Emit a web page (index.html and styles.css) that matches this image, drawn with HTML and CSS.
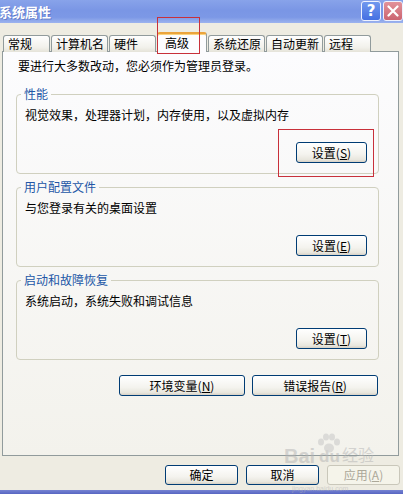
FILE: index.html
```html
<!DOCTYPE html>
<html lang="zh-CN">
<head>
    <meta charset="UTF-8">
    <title>系统属性</title>
    <link rel="stylesheet" href="styles.css">
</head>
<body>
    <div class="titlebar">
        <span class="title">系统属性</span>
        <div class="controls">
            <span class="ctl help">?</span>
            <span class="ctl close">
                <svg width="12" height="12" viewBox="0 0 12 12"><path d="M1.5 1.5 L10.5 10.5 M10.5 1.5 L1.5 10.5" stroke="#fff" stroke-width="2.2" stroke-linecap="round"/></svg>
            </span>
        </div>
    </div>

    <div class="tabs">
        <span class="tab">常规</span>
        <span class="tab">计算机名</span>
        <span class="tab">硬件</span>
        <span class="tab active">高级</span>
        <span class="tab">系统还原</span>
        <span class="tab">自动更新</span>
        <span class="tab">远程</span>
    </div>

    <div class="panel">
        <p class="intro">要进行大多数改动，您必须作为管理员登录。</p>

        <fieldset class="group">
            <legend>性能</legend>
            <p class="desc">视觉效果，处理器计划，内存使用，以及虚拟内存</p>
            <div class="actions"><button class="btn btn-set">设置(<u>S</u>)</button></div>
        </fieldset>

        <fieldset class="group">
            <legend>用户配置文件</legend>
            <p class="desc">与您登录有关的桌面设置</p>
            <div class="actions"><button class="btn btn-set">设置(<u>E</u>)</button></div>
        </fieldset>

        <fieldset class="group">
            <legend>启动和故障恢复</legend>
            <p class="desc">系统启动，系统失败和调试信息</p>
            <div class="actions"><button class="btn btn-set">设置(<u>T</u>)</button></div>
        </fieldset>

        <div class="extra">
            <button class="btn btn-wide">环境变量(<u>N</u>)</button>
            <button class="btn btn-wide">错误报告(<u>R</u>)</button>
        </div>
    </div>

    <div class="footer">
        <button class="btn btn-dlg">确定</button>
        <button class="btn btn-dlg">取消</button>
        <button class="btn btn-dlg" disabled>应用(<u>A</u>)</button>
    </div>
    <div class="frame-bottom"></div>

    <!-- red marks drawn over the screenshot -->
    <div class="mark mark-tab"></div>
    <div class="mark mark-btn"></div>

    <div class="watermark">
        <svg class="paw" width="26" height="20" viewBox="0 0 26 20">
            <ellipse cx="5" cy="9" rx="3" ry="3.5"/>
            <ellipse cx="10" cy="4" rx="3" ry="3.5"/>
            <ellipse cx="16" cy="4" rx="3" ry="3.5"/>
            <ellipse cx="21" cy="9" rx="3" ry="3.5"/>
            <ellipse cx="13" cy="15" rx="5" ry="4.5"/>
        </svg>
        <span class="wm-bai">Bai</span><span class="wm-du">du</span><span class="wm-jy">经验</span>
        <span class="wm-url">jingyan.baidu.com</span>
    </div>
</body>
</html>
```

FILE: styles.css
```css
body {
    margin: 0;
    width: 403px;
    height: 494px;
    overflow: hidden;
    position: relative;
    font-family: "Noto Sans CJK SC", sans-serif;
    font-size: 12px;
    color: #000;
    background-color: #eeece2;
}
.titlebar {
    height: 23px;
    display: flex;
    align-items: center;
    justify-content: space-between;
    background: linear-gradient(#88a3ea, #7a96e5 45%, #7c98e6 75%, #9cb3ee);
}
.title {
    margin-left: -1px;
    color: #fff;
    font-size: 13px;
    font-weight: bold;
    text-shadow: 1px 1px 0 rgba(40, 60, 140, 0.35);
}
.controls {
    display: flex;
    gap: 2px;
    align-self: flex-start;
    padding-top: 1px;
}
.ctl {
    width: 20px;
    height: 20px;
    box-sizing: border-box;
    border: 1px solid #eef2ff;
    border-radius: 3px;
    display: flex;
    align-items: center;
    justify-content: center;
    color: #fff;
}
.help {
    background: linear-gradient(#7198ee, #4570e2);
    font: bold 15px "DejaVu Sans", sans-serif;
}
.close {
    background: linear-gradient(#e2929a, #cb6470);
}
.tabs {
    display: flex;
    align-items: flex-end;
    gap: 1px;
    height: 20px;
    padding: 9px 0 0 3px;
}
.tab {
    height: 17px;
    min-width: 47px;
    box-sizing: border-box;
    padding: 0 3px 0 4px;
    border: 1px solid #919b9c;
    border-bottom: 0;
    border-radius: 3px 3px 0 0;
    background: linear-gradient(#fefefe, #f2f1eb 70%, #e5e3d9);
    line-height: 15px;
    white-space: nowrap;
}
.tab.active {
    position: relative;
    z-index: 1;
    height: 20px;
    min-width: 50px;
    padding: 0 6px 0 7px;
    border-top: 2px solid #eba43c;
    background: #fcfcfe;
    box-shadow: inset 0 1px 0 #fbd37c;
    line-height: 17px;
}
.panel {
    height: 405px;
    box-sizing: border-box;
    margin: -1px 4px 0 2px;
    padding: 7px 19px 0 13px;
    border: 1px solid #919b9c;
    background: linear-gradient(#fcfcfe, #f3f2ec);
}
.intro {
    margin: 0 0 0 2px;
    line-height: 14px;
}
.group {
    min-width: 0;
    margin: 14px 0 0;
    padding: 7px 11px 10px 8px;
    border: 1px solid #d0d0bf;
    border-radius: 4px;
}
.group + .group {
    margin-top: 6px;
}
.group legend {
    margin-left: -4px;
    padding: 0 3px;
    color: #2256a6;
    line-height: 14px;
}
.desc {
    margin: 0;
    line-height: 14px;
}
.actions {
    display: flex;
    justify-content: flex-end;
    margin-top: 20px;
}
.btn {
    height: 21px;
    box-sizing: border-box;
    padding: 0;
    border: 1px solid #003c74;
    border-radius: 3px;
    background: linear-gradient(#ffffff, #f4f3ee 60%, #e8e6dd 88%, #d6d0c5);
    font-family: "Noto Sans CJK SC", sans-serif;
    font-size: 12px;
    line-height: 19px;
    color: #000;
}
.btn u {
    text-underline-offset: 1px;
}
.btn-set {
    width: 71px;
}
.extra {
    display: flex;
    justify-content: flex-end;
    gap: 7px;
    margin-top: 15px;
    padding-right: 1px;
}
.btn-wide {
    width: 126px;
}
.footer {
    height: 34px;
    box-sizing: border-box;
    display: flex;
    justify-content: flex-end;
    align-items: flex-start;
    gap: 8px;
    padding: 9px 3px 0 0;
}
.btn-dlg {
    width: 73px;
    height: 20px;
    line-height: 18px;
}
.btn:disabled {
    color: #aca899;
    border-color: #c9c7ba;
    background: #f5f4ea;
}
.frame-bottom {
    height: 4px;
    background: linear-gradient(#7683d2, #5765c2);
}
.mark {
    position: absolute;
    z-index: 2;
    border: 1px solid #c8303a;
}
.mark-tab {
    left: 157px;
    top: 17px;
    width: 41px;
    height: 35px;
}
.mark-btn {
    left: 278px;
    top: 129px;
    width: 94px;
    height: 46px;
}
.watermark {
    position: absolute;
    left: 284px;
    top: 433px;
    width: 100px;
    height: 59px;
    opacity: 0.5;
    color: #b4b4b4;
    fill: #c4c4c4;
    font-family: "Liberation Sans", sans-serif;
}
.watermark span {
    position: absolute;
    white-space: nowrap;
}
.paw {
    position: absolute;
    left: 32px;
    top: 0;
}
.wm-bai {
    left: 0;
    top: 16px;
    font-size: 20px;
    font-weight: bold;
    line-height: 14px;
}
.wm-du {
    left: 35px;
    top: 17px;
    font-size: 17px;
    font-weight: bold;
    line-height: 13px;
}
.wm-jy {
    left: 58px;
    top: 15px;
    font-family: "Noto Sans CJK SC", sans-serif;
    font-size: 16px;
    line-height: 12px;
}
.wm-url {
    left: 8px;
    top: 52px;
    font-size: 7px;
    line-height: 7px;
}
```
